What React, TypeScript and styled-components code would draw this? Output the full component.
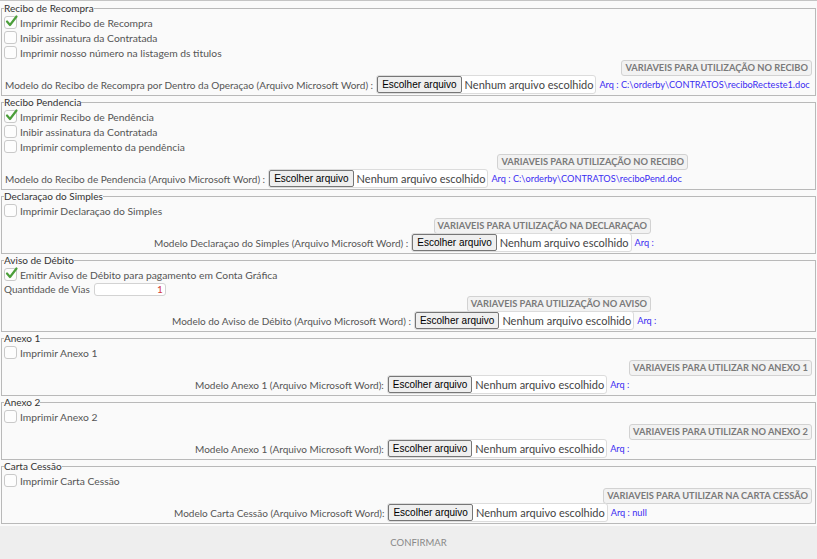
import React from "react"
import styled, { createGlobalStyle } from "styled-components"

const GlobalStyle = createGlobalStyle`
  html, body {
    margin: 0;
    padding: 0;
  }

  body {
    background: #fafafa;
    color: #555;
    font-family: Lato, "Open Sans", sans-serif;
    font-size: 10px;
  }
`

type Check = { label: string, checked?: boolean }

type Section = {
  title: string
  checks: Check[]
  vias?: boolean
  varLabel: string
  varInset: number
  model: string
  modelInset: number
  arq: string
}

const SECTIONS: Section[] = [
  {
    title: "Recibo de Recompra",
    checks: [
      { label: "Imprimir Recibo de Recompra", checked: true },
      { label: "Inibir assinatura da Contratada" },
      { label: "Imprimir nosso número na listagem ds titulos" },
    ],
    varLabel: "VARIAVEIS PARA UTILIZAÇÃO NO RECIBO",
    varInset: 1,
    model: "Modelo do Recibo de Recompra por Dentro da Operaçao (Arquivo Microsoft Word) :",
    modelInset: 1,
    arq: "Arq : C:\\orderby\\CONTRATOS\\reciboRecteste1.doc",
  },
  {
    title: "Recibo Pendencia",
    checks: [
      { label: "Imprimir Recibo de Pendência", checked: true },
      { label: "Inibir assinatura da Contratada" },
      { label: "Imprimir complemento da pendência" },
    ],
    varLabel: "VARIAVEIS PARA UTILIZAÇÃO NO RECIBO",
    varInset: 125,
    model: "Modelo do Recibo de Pendencia (Arquivo Microsoft Word) :",
    modelInset: 1,
    arq: "Arq : C:\\orderby\\CONTRATOS\\reciboPend.doc",
  },
  {
    title: "Declaraçao do Simples",
    checks: [ { label: "Imprimir Declaraçao do Simples" } ],
    varLabel: "VARIAVEIS PARA UTILIZAÇÃO NA DECLARAÇAO",
    varInset: 162,
    model: "Modelo Declaraçao do Simples (Arquivo Microsoft Word) :",
    modelInset: 150,
    arq: "Arq :",
  },
  {
    title: "Aviso de Débito",
    checks: [ { label: "Emitir Aviso de Débito para pagamento em Conta Gráfica", checked: true } ],
    vias: true,
    varLabel: "VARIAVEIS PARA UTILIZAÇÃO NO AVISO",
    varInset: 162,
    model: "Modelo do Aviso de Débito (Arquivo Microsoft Word) :",
    modelInset: 168,
    arq: "Arq :",
  },
  {
    title: "Anexo 1",
    checks: [ { label: "Imprimir Anexo 1" } ],
    varLabel: "VARIAVEIS PARA UTILIZAR NO ANEXO 1",
    varInset: 1,
    model: "Modelo Anexo 1 (Arquivo Microsoft Word):",
    modelInset: 191,
    arq: "Arq :",
  },
  {
    title: "Anexo 2",
    checks: [ { label: "Imprimir Anexo 2" } ],
    varLabel: "VARIAVEIS PARA UTILIZAR NO ANEXO 2",
    varInset: 1,
    model: "Modelo Anexo 1 (Arquivo Microsoft Word):",
    modelInset: 191,
    arq: "Arq :",
  },
  {
    title: "Carta Cessão",
    checks: [ { label: "Imprimir Carta Cessão" } ],
    varLabel: "VARIAVEIS PARA UTILIZAR NA CARTA CESSÃO",
    varInset: 1,
    model: "Modelo Carta Cessão (Arquivo Microsoft Word):",
    modelInset: 170,
    arq: "Arq : null",
  },
]

const Page = styled.div`
  display: flex;
  flex-direction: column;
  height: 559px;
  overflow: hidden;
`

const Content = styled.div`
  flex: 1;
  overflow: hidden;
  border-top: 1px solid #c4c4c4;
  padding: 1px 1px 0;
`

const Box = styled.fieldset`
  margin: 0;
  padding: 1px 2px 1px;
  border: 1px solid #b9b9b9;
  min-width: 0;
`

const Title = styled.legend`
  padding: 0;
  line-height: 12px;
  color: #333;
`

const CheckRow = styled.label`
  display: flex;
  align-items: center;
  gap: 3px;
  height: 15px;
  font-size: 10.3px;
`

const CheckBox = styled.span`
  position: relative;
  width: 11px;
  height: 11px;
  border: 1px solid #c9c9c9;
  border-radius: 3px;
  background: #fdfdfd;
  flex: none;

  svg {
    position: absolute;
    left: 0;
    top: -2px;
  }
`

const ViasRow = styled.div`
  display: flex;
  align-items: center;
  gap: 3px;
  height: 14px;
`

const ViasInput = styled.span`
  width: 66px;
  height: 11px;
  line-height: 11px;
  margin-left: 1px;
  padding: 0 2px;
  border: 1px solid #d3d3d3;
  border-radius: 3px;
  background: #fff;
  color: #d23a3a;
  text-align: right;
`

const VarRow = styled.div<{ inset: number }>`
  display: flex;
  justify-content: flex-end;
  align-items: center;
  height: 15px;
  padding-right: ${ ({ inset }) => inset }px;
`

const VarButton = styled.span`
  height: 14px;
  line-height: 14px;
  padding: 0 3px;
  border: 1px solid #d2d2d2;
  border-radius: 3px;
  background: #f2f2f2;
  color: #7a7a7a;
  font-size: 9.3px;
  font-weight: 700;
  white-space: nowrap;
`

const ModelRow = styled.div<{ inset: number }>`
  display: flex;
  align-items: center;
  gap: 3px;
  height: 19px;
  padding-left: ${ ({ inset }) => inset }px;
  white-space: nowrap;
`

const FileBox = styled.span`
  display: flex;
  align-items: center;
  height: 17px;
  padding-right: 2px;
  border: 1px solid #dcdcdc;
  border-radius: 3px;
  background: #fff;
`

const FileButton = styled.span`
  height: 15px;
  line-height: 15px;
  padding: 0 4px;
  border: 1px solid #767676;
  border-radius: 2px;
  background: #efefef;
  color: #000;
  font-family: "Liberation Sans", Arial, sans-serif;
  font-size: 10px;
`

const FileText = styled.span`
  padding-left: 3px;
  color: #444;
  font-size: 11px;
`

const Arq = styled.span`
  color: #3a2cf2;
  font-size: 9.2px;
`

const Footer = styled.div`
  display: flex;
  align-items: center;
  justify-content: center;
  height: 33px;
  padding-left: 20px;
  background: #eeeeee;
  color: #888;
  font-size: 9.5px;
`

const Tick = () => (
  <svg width="13" height="13" viewBox="0 0 13 13">
    <path d="M2 6.5 L5 10 L11.5 1.5" fill="none" stroke="#4b9e3a" strokeWidth="2.2" strokeLinecap="round" strokeLinejoin="round" />
  </svg>
)

const SectionBox = ({ section }: { section: Section }) => (
  <Box>
    <Title>{ section.title }</Title>

    { section.checks.map( check => (
      <CheckRow key={ check.label }>
        <CheckBox>{ check.checked && <Tick /> }</CheckBox>
        { check.label }
      </CheckRow>
    )) }

    { section.vias && (
      <ViasRow>
        Quantidade de Vias
        <ViasInput>1</ViasInput>
      </ViasRow>
    ) }

    <VarRow inset={ section.varInset }>
      <VarButton>{ section.varLabel }</VarButton>
    </VarRow>

    <ModelRow inset={ section.modelInset }>
      { section.model }
      <FileBox>
        <FileButton>Escolher arquivo</FileButton>
        <FileText>Nenhum arquivo escolhido</FileText>
      </FileBox>
      <Arq>{ section.arq }</Arq>
    </ModelRow>
  </Box>
)

export default function App() {
  return (
    <>
      <GlobalStyle />
      <Page>
        <Content>
          { SECTIONS.map( section => <SectionBox key={ section.title } section={ section } /> ) }
        </Content>
        <Footer>CONFIRMAR</Footer>
      </Page>
    </>
  )
}
